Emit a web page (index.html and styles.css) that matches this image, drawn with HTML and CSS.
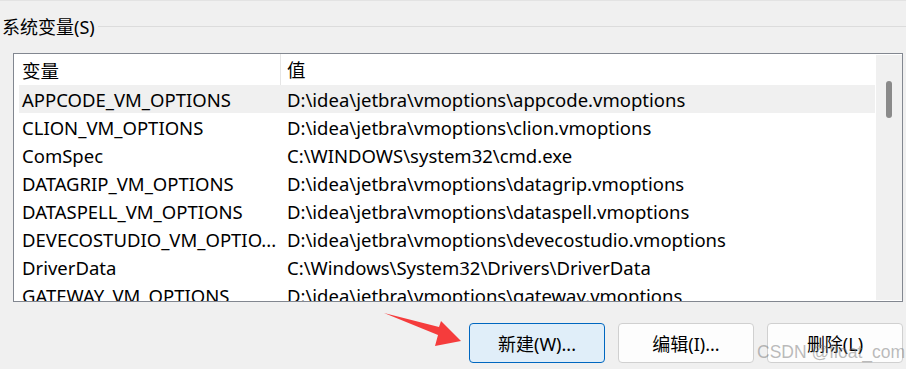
FILE: index.html
```html
<!DOCTYPE html>
<html>
<head>
<meta charset="utf-8">
<title>系统变量</title>
<link rel="stylesheet" href="styles.css">
</head>
<body>
<div class="group-head">
  <span class="group-title">系统变量(S)</span>
  <span class="group-line"></span>
</div>

<div class="listbox">
  <div class="list">
    <div class="row head"><span class="c1">变量</span><span class="c2">值</span></div>
    <div class="row hover"><span class="c1">APPCODE_VM_OPTIONS</span><span class="c2">D:\idea\jetbra\vmoptions\appcode.vmoptions</span></div>
    <div class="row"><span class="c1">CLION_VM_OPTIONS</span><span class="c2">D:\idea\jetbra\vmoptions\clion.vmoptions</span></div>
    <div class="row"><span class="c1">ComSpec</span><span class="c2">C:\WINDOWS\system32\cmd.exe</span></div>
    <div class="row"><span class="c1">DATAGRIP_VM_OPTIONS</span><span class="c2">D:\idea\jetbra\vmoptions\datagrip.vmoptions</span></div>
    <div class="row"><span class="c1">DATASPELL_VM_OPTIONS</span><span class="c2">D:\idea\jetbra\vmoptions\dataspell.vmoptions</span></div>
    <div class="row"><span class="c1">DEVECOSTUDIO_VM_OPTIO...</span><span class="c2">D:\idea\jetbra\vmoptions\devecostudio.vmoptions</span></div>
    <div class="row"><span class="c1">DriverData</span><span class="c2">C:\Windows\System32\Drivers\DriverData</span></div>
    <div class="row"><span class="c1">GATEWAY_VM_OPTIONS</span><span class="c2">D:\idea\jetbra\vmoptions\gateway.vmoptions</span></div>
  </div>
  <div class="scrollbar"><div class="thumb"></div></div>
</div>

<div class="btns">
  <a href="javascript:void(0);" class="btn default">新建(W)...</a>
  <a href="javascript:void(0);" class="btn">编辑(I)...</a>
  <a href="javascript:void(0);" class="btn">删除(L)</a>
</div>

<!-- 标注箭头 -->
<svg class="arrow" width="80" height="40" viewBox="0 0 80 40">
  <polygon points="0,2 55,16 57,10 77,30 51,35 54,24" fill="#f53c3c"/>
</svg>

<div class="watermark">CSDN @float_com</div>
</body>
</html>
```

FILE: styles.css
```css
*{padding:0;margin:0;box-sizing:border-box;}
html,body{width:906px;height:369px;overflow:hidden;}
body{background:#f0f0f0;border-top:1px solid #e3e3e3;position:relative;font-family:"Noto Sans","Noto Sans CJK SC",sans-serif;font-size:18.5px;color:#000;}
a{text-decoration:none;color:#000;}

.group-head{display:flex;align-items:center;height:20px;margin-top:16px;padding-left:2px;}
.group-title{font-size:18px;line-height:20px;}
.group-line{flex:1;border-top:1px solid #dcdcdc;margin-left:3px;margin-top:-1px;}

.listbox{display:flex;margin:16px 3px 0 13px;height:249px;border:1px solid #828790;background:#fff;overflow:hidden;}
.list{width:862px;}
.row{display:flex;height:28px;align-items:center;white-space:nowrap;}
.row .c1{width:266px;padding-left:8px;overflow:hidden;}
.row .c2{padding-left:7px;}
.head{height:31px;}
.head .c1{padding-left:8px;width:266px;}
.head .c2{border-left:1px solid #e5e5e5;height:31px;line-height:31px;padding-left:6px;}
.hover{background:#f0f0f0;margin-left:5px;}
.hover .c1{padding-left:3px;width:261px;}

.scrollbar{width:26px;margin:1px 0 1px 1px;background:#f0f0f0;padding:26px 0 0 10px;}
.thumb{width:6px;height:37px;background:#8a8a8a;border-radius:3px;}

.btns{display:flex;justify-content:flex-end;gap:13px;margin:21px 3px 0 0;}
.btn{display:flex;align-items:center;justify-content:center;width:136px;height:40px;border:1px solid #d0d0d0;border-radius:4px;background:#fdfdfd;font-size:18px;}
.btn.default{background:#e0eef9;border-color:#0067c0;}

.arrow{position:absolute;left:384px;top:310px;}
.watermark{position:absolute;left:757px;top:341px;white-space:nowrap;font-family:"Liberation Sans",sans-serif;font-size:17.5px;color:rgba(120,120,120,0.5);}
```
